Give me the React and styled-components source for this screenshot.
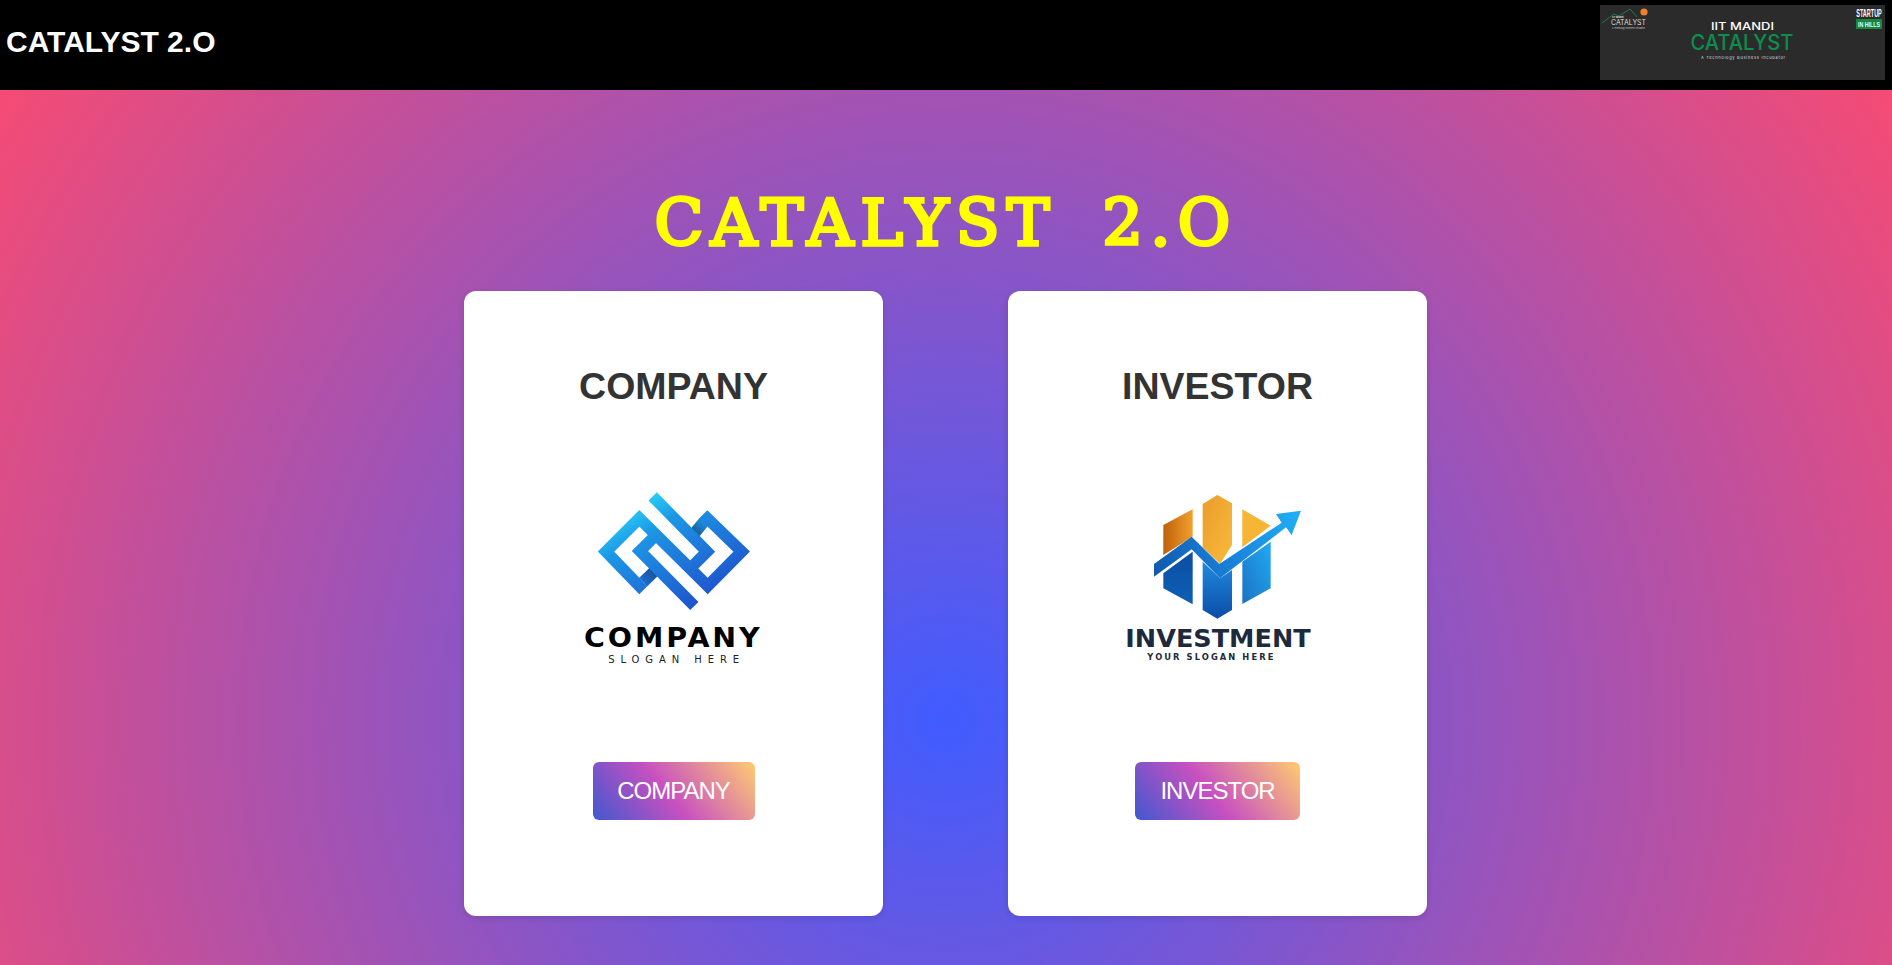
import React from 'react'
import styled, { createGlobalStyle } from 'styled-components'

const GlobalStyle = createGlobalStyle`
  html, body { margin: 0; padding: 0; height: 100%; overflow: hidden; }
  body { font-family: "Liberation Sans", Arial, sans-serif; }
  * { box-sizing: border-box; }
`

const Page = styled.div`
  display: flex;
  flex-direction: column;
  height: 965px;
`

const Header = styled.header`
  height: 90px;
  background: #000;
  display: flex;
  align-items: center;
  justify-content: space-between;
  padding: 5px 7px 10px 6px;
`

const Brand = styled.div`
  color: #fff;
  font-size: 30px;
  font-weight: 700;
  line-height: 1;
  padding-bottom: 2px;
`

const Banner = styled.svg`
  width: 285px;
  height: 75px;
  display: block;
`

const Main = styled.main`
  flex: 1;
  display: flex;
  flex-direction: column;
  align-items: center;
  padding-top: 87px;
  background: radial-gradient(circle 1136px at 946px 630px, #405cff 0%, #f54b74 100%);
`

const Title = styled.h1`
  margin: 0 0 21px;
  color: #ffff00;
  font-family: "DejaVu Serif", "Courier New", serif;
  font-size: 64px;
  font-weight: 400;
  line-height: 93px;
  letter-spacing: 7.25px;
  word-spacing: 18px;
  -webkit-text-stroke: 3.4px #ffff00;
`

const Cards = styled.div`
  display: flex;
  gap: 125px;
  margin-right: 1px;
`

const Card = styled.section`
  width: 419px;
  height: 625px;
  background: #fff;
  border-radius: 12px;
  box-shadow: 0 2px 6px rgba(0, 0, 0, 0.12);
  display: flex;
  flex-direction: column;
  align-items: center;
  padding-top: 74px;
`

const CardTitle = styled.h2`
  margin: 0;
  color: #333;
  font-size: 37.5px;
  font-weight: 700;
  line-height: 43px;
`

const Logo = styled.svg`
  width: 230px;
  height: 210px;
  display: block;
  margin-top: 62px;
  margin-left: ${p => p.$nudge}px;
`

const ActionButton = styled.button`
  margin-top: 82px;
  width: ${p => p.$width}px;
  height: 58px;
  border: none;
  border-radius: 6px;
  color: #fff;
  font-family: inherit;
  font-size: 24px;
  letter-spacing: -1px;
  background: linear-gradient(52deg, #4158d0 0%, #c850c0 46%, #ffcc70 100%);
`

const CompanyLogo = () => (
  <Logo viewBox="0 0 690 630" $nudge={3}>
    <defs>
      <linearGradient id="companyBlue" gradientUnits="userSpaceOnUse" x1="230" y1="70" x2="450" y2="420">
        <stop offset="0" stopColor="#2be0fb" />
        <stop offset="0.28" stopColor="#1d97e6" />
        <stop offset="1" stopColor="#1f4cc9" />
      </linearGradient>
      <linearGradient id="foldTop" gradientUnits="userSpaceOnUse" x1="398" y1="190" x2="432" y2="156">
        <stop offset="0" stopColor="#15578f" />
        <stop offset="1" stopColor="#1f8edc" />
      </linearGradient>
      <linearGradient id="foldBottom" gradientUnits="userSpaceOnUse" x1="290" y1="300" x2="250" y2="338">
        <stop offset="0" stopColor="#15508f" />
        <stop offset="1" stopColor="#1e6bd0" />
      </linearGradient>
    </defs>
    <path d="M250 336L285 302" fill="none" stroke="url(#foldBottom)" strokeWidth="35" />
    <path d="M405 188L432 155" fill="none" stroke="url(#foldTop)" strokeWidth="35" />
    <g fill="none" stroke="url(#companyBlue)" strokeWidth="35" strokeLinejoin="miter">
      <path d="M250 336L238 348L138 245L238 145L443 348L545 245L442 145L430 157" />
      <path d="M278 79L441 245L398 288" />
      <path d="M403 408L240 243L285 198" />
    </g>
    <text x="340" y="532" fill="#000" fontFamily="DejaVu Sans, sans-serif" fontSize="78" fontWeight="700" letterSpacing="8" textAnchor="middle" textLength="536" lengthAdjust="spacingAndGlyphs">COMPANY</text>
    <text x="341" y="580" fill="#222" fontFamily="DejaVu Sans, sans-serif" fontSize="30" textAnchor="middle" textLength="393" lengthAdjust="spacing">SLOGAN HERE</text>
  </Logo>
)

const InvestorLogo = () => (
  <Logo viewBox="0 0 690 630" $nudge={-5}>
    <defs>
      <linearGradient id="orangeLeft" x1="0" y1="0" x2="1" y2="0">
        <stop offset="0" stopColor="#c0600a" />
        <stop offset="1" stopColor="#efa02e" />
      </linearGradient>
      <linearGradient id="orangeMid" x1="0" y1="0" x2="1" y2="1">
        <stop offset="0" stopColor="#eb9c2a" />
        <stop offset="1" stopColor="#f8bb3d" />
      </linearGradient>
      <linearGradient id="blueLeft" x1="0" y1="0" x2="0" y2="1">
        <stop offset="0" stopColor="#0c4ea3" />
        <stop offset="1" stopColor="#0d5fb4" />
      </linearGradient>
      <linearGradient id="blueMid" x1="0" y1="0" x2="0" y2="1">
        <stop offset="0" stopColor="#2189e0" />
        <stop offset="1" stopColor="#0b4da6" />
      </linearGradient>
      <linearGradient id="blueRight" x1="1" y1="0" x2="0" y2="1">
        <stop offset="0" stopColor="#21aaf3" />
        <stop offset="1" stopColor="#1b72c3" />
      </linearGradient>
      <linearGradient id="arrowBlue" gradientUnits="userSpaceOnUse" x1="162" y1="300" x2="600" y2="130">
        <stop offset="0" stopColor="#1059ae" />
        <stop offset="0.5" stopColor="#1a83dc" />
        <stop offset="1" stopColor="#1fb0f6" />
      </linearGradient>
    </defs>
    <polygon points="190,165 278,118 278,200 190,255" fill="url(#orangeLeft)" />
    <polygon points="308,102 352,75 396,100 396,225 360,282 308,232" fill="url(#orangeMid)" />
    <polygon points="427,118 512,167 427,232" fill="#f6b535" />
    <polygon points="190,310 278,245 278,403 190,355" fill="url(#blueLeft)" />
    <polygon points="308,275 360,325 396,300 396,420 352,446 308,420" fill="url(#blueMid)" />
    <polygon points="427,275 512,215 512,355 427,402" fill="url(#blueRight)" />
    <polygon points="162,282 275,200 358,282 545,158 528,132 603,122 575,195 558,172 360,325 275,238 162,320" fill="url(#arrowBlue)" />
    <text x="354" y="530" fill="#1c2a3c" fontFamily="DejaVu Sans, sans-serif" fontSize="75" fontWeight="700" textAnchor="middle" textLength="556" lengthAdjust="spacingAndGlyphs">INVESTMENT</text>
    <text x="331" y="570" fill="#1c2a3c" fontFamily="DejaVu Sans, sans-serif" fontSize="25" fontWeight="700" textAnchor="middle" textLength="378" lengthAdjust="spacing">YOUR SLOGAN HERE</text>
  </Logo>
)

const CatalystBanner = () => (
  <Banner viewBox="0 0 285 75">
    <rect width="285" height="75" fill="#2b2b2b" />
    <path d="M2 18L14 9L19 11L30 4L37 12" fill="none" stroke="#1f9a55" strokeWidth="0.7" />
    <circle cx="44" cy="7" r="3.6" fill="#f08030" />
    <text x="12" y="13" fill="#ddd" fontFamily="Inter, sans-serif" fontSize="2.6" fontWeight="700">IIT Mandi</text>
    <text x="11" y="20" fill="#ddd" fontFamily="Inter, sans-serif" fontSize="7" textLength="35" lengthAdjust="spacingAndGlyphs">CATALYST</text>
    <text x="12" y="23.5" fill="#ccc" fontFamily="Inter, sans-serif" fontSize="2" textLength="33" lengthAdjust="spacingAndGlyphs">A Technology Business Incubator</text>
    <text transform="translate(269 12) scale(1 2)" fill="#fff" fontFamily="Liberation Sans, sans-serif" fontSize="5.5" fontWeight="700" textAnchor="middle">STARTUP</text>
    <rect x="256" y="14" width="26" height="10" fill="#17873f" />
    <text transform="translate(269 22) scale(1 1.45)" fill="#dff" fontFamily="Liberation Sans, sans-serif" fontSize="5.3" fontWeight="700" textAnchor="middle">IN HILLS</text>
    <text x="142.5" y="25" fill="#fff" fontFamily="Inter, sans-serif" fontSize="11" fontWeight="500" textAnchor="middle" textLength="63" lengthAdjust="spacingAndGlyphs">IIT MANDI</text>
    <text x="142" y="45" fill="#0a8f4c" fontFamily="Inter, sans-serif" fontSize="21" fontWeight="500" textAnchor="middle" textLength="103" lengthAdjust="spacingAndGlyphs">CATALYST</text>
    <text x="143" y="54" fill="#ddd" fontFamily="Inter, sans-serif" fontSize="4" textAnchor="middle" textLength="84" lengthAdjust="spacing">A Technology Business Incubator</text>
  </Banner>
)

const App = () => (
  <Page>
    <GlobalStyle />
    <Header>
      <Brand>CATALYST 2.O</Brand>
      <CatalystBanner />
    </Header>
    <Main>
      <Title>CATALYST 2.O</Title>
      <Cards>
        <Card>
          <CardTitle>COMPANY</CardTitle>
          <CompanyLogo />
          <ActionButton $width={162}>COMPANY</ActionButton>
        </Card>
        <Card>
          <CardTitle>INVESTOR</CardTitle>
          <InvestorLogo />
          <ActionButton $width={165}>INVESTOR</ActionButton>
        </Card>
      </Cards>
    </Main>
  </Page>
)

export default App
